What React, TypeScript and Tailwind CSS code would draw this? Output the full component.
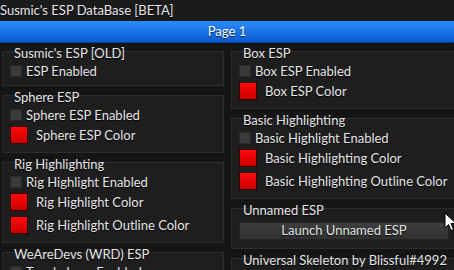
import React from 'react';

const font = { fontFamily: 'Lato, "Noto Sans", sans-serif' };

function Checkbox({ label }: { label: string }) {
  return (
    <div className="flex items-center h-[12px] gap-[4px]">
      <div className="w-[12px] h-[12px] bg-[#3a3a3a] border border-[#2a2a2a] shrink-0" />
      <span className="text-[13px] leading-none text-[#e6e6e6] whitespace-nowrap [text-shadow:0_1px_1px_#000]">{label}</span>
    </div>
  );
}

function ColorRow({ label }: { label: string }) {
  return (
    <div className="flex items-center h-[18px] gap-[8px]">
      <div className="w-[18px] h-[18px] bg-gradient-to-b from-[#ff0a0a] to-[#c80000] border border-[#3a0000] shrink-0" />
      <span className="text-[13px] leading-none text-[#e6e6e6] whitespace-nowrap [text-shadow:0_1px_1px_#000]">{label}</span>
    </div>
  );
}

function Section({ title, children }: { title: string; children?: React.ReactNode }) {
  return (
    <div className="bg-[#1e1e1e] border border-[#2c2c2c] px-[7px] pb-[8px]">
      <div className="flex items-start h-[13px] pl-[4px]">
        <div className="-mt-[4px] text-[13px] leading-[10px] text-[#e6e6e6] whitespace-nowrap [text-shadow:0_1px_1px_#000]">{title}</div>
      </div>
      <div className="flex flex-col gap-[5px]">{children}</div>
    </div>
  );
}

export default function App() {
  return (
    <div className="relative w-[454px] h-[270px] overflow-hidden bg-[#151515]" style={font}>
      <div className="h-[21px] bg-[#1b1b1b] flex items-center text-[13px] text-[#e8e8e8] whitespace-nowrap [text-shadow:0_1px_1px_#000]">
        Susmic's ESP DataBase [BETA]
      </div>
      <div className="h-[22px] bg-gradient-to-b from-[#2a8dff] to-[#0a5bd2] border-b border-[#08408f] flex items-center justify-center text-[13px] text-white [text-shadow:0_1px_1px_#00204a]">
        Page 1
      </div>
      <div className="flex gap-[7px] pl-[2px] pt-[8px]">
        <div className="w-[222px] shrink-0 flex flex-col gap-[9px]">
          <Section title="Susmic's ESP [OLD]">
            <Checkbox label="ESP Enabled" />
          </Section>
          <Section title="Sphere ESP">
            <Checkbox label="Sphere ESP Enabled" />
            <ColorRow label="Sphere ESP Color" />
          </Section>
          <Section title="Rig Highlighting">
            <Checkbox label="Rig Highlight Enabled" />
            <ColorRow label="Rig Highlight Color" />
            <ColorRow label="Rig Highlight Outline Color" />
          </Section>
          <Section title="WeAreDevs (WRD) ESP">
            <Checkbox label="Toggle Love Enabled" />
          </Section>
        </div>
        <div className="w-[232px] shrink-0 flex flex-col gap-[9px]">
          <Section title="Box ESP">
            <Checkbox label="Box ESP Enabled" />
            <ColorRow label="Box ESP Color" />
          </Section>
          <Section title="Basic Highlighting">
            <Checkbox label="Basic Highlight Enabled" />
            <ColorRow label="Basic Highlighting Color" />
            <ColorRow label="Basic Highlighting Outline Color" />
          </Section>
          <Section title="Unnamed ESP">
            <div className="w-[210px] h-[18px] bg-gradient-to-b from-[#3e3e3e] to-[#303030] border border-[#232323] flex items-center justify-center text-[13px] text-[#e6e6e6] [text-shadow:0_1px_1px_#000]">
              Launch Unnamed ESP
            </div>
          </Section>
          <Section title="Universal Skeleton by Blissful#4992">
            <Checkbox label="Skeleton Enabled" />
          </Section>
        </div>
      </div>
      <svg className="absolute left-[444px] top-[212px]" width="14" height="20" viewBox="0 0 14 20">
        <path d="M1 1 L1 16 L4.5 12.5 L7 18.5 L9.5 17.5 L7 11.5 L12 11.5 Z" fill="#fff" stroke="#000" strokeWidth="1" />
      </svg>
    </div>
  );
}
